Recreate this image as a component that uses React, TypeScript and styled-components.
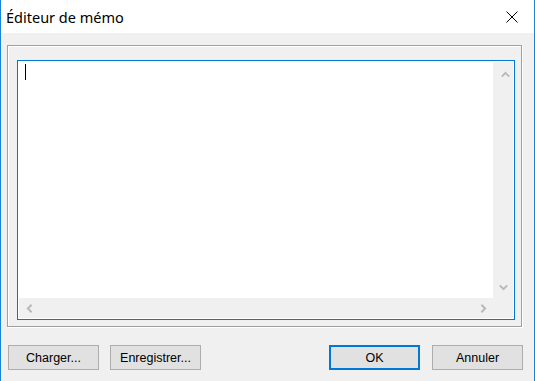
import React from "react";
import styled, { createGlobalStyle } from "styled-components";

const Global = createGlobalStyle`
  html, body { margin: 0; padding: 0; background: #f0f0f0; }
  #root { width: 535px; height: 381px; }
`;

const Window = styled.div`
  width: 535px;
  height: 381px;
  box-sizing: border-box;
  border-left: 1px solid #1883d7;
  border-right: 1px solid #1883d7;
  display: flex;
  flex-direction: column;
  background: #f0f0f0;
  overflow: hidden;
`;

const TitleBar = styled.div`
  height: 33px;
  flex: none;
  background: #ffffff;
  display: flex;
  align-items: center;
  justify-content: space-between;
  padding-left: 5px;
`;

const Title = styled.span`
  font-family: "Noto Sans", "Open Sans", sans-serif;
  font-size: 14.5px;
  color: #000;
  line-height: 33px;
  padding-top: 1px;
`;

const CloseButton = styled.div`
  width: 44px;
  height: 33px;
  display: flex;
  align-items: center;
  justify-content: center;
`;

const Body = styled.div`
  flex: 1;
  display: flex;
  flex-direction: column;
  padding: 12px 0 0 6px;
`;

const GroupBox = styled.div`
  width: 515px;
  height: 282px;
  box-sizing: border-box;
  border: 1px solid #a0a0a0;
  box-shadow: inset 1px 1px 0 #ffffff, 1px 1px 0 #ffffff;
  padding: 14px 6px 6px 9px;
`;

const Memo = styled.div`
  width: 498px;
  height: 260px;
  box-sizing: border-box;
  border: 1px solid #0078d7;
  padding: 1px;
  background: #ffffff;
  display: grid;
  grid-template-columns: 1fr 20px;
  grid-template-rows: 1fr 20px;
`;

const TextArea = styled.div`
  background: #ffffff;
  padding: 2px 0 0 6px;
`;

const Caret = styled.div`
  width: 1px;
  height: 16px;
  background: #000;
`;

const ScrollTrack = styled.div<{ $vertical?: boolean }>`
  background: #f0f0f0;
  display: flex;
  flex-direction: ${(p) => (p.$vertical ? "column" : "row")};
  justify-content: space-between;
`;

const ScrollButton = styled.div<{ $size: number }>`
  flex: none;
  width: ${(p) => p.$size}px;
  height: ${(p) => p.$size}px;
  display: flex;
  align-items: center;
  justify-content: center;
`;

const Corner = styled.div`
  background: #f0f0f0;
`;

const ButtonRow = styled.div`
  margin-top: 18px;
  width: 515px;
  padding-left: 1px;
  display: flex;
  justify-content: space-between;
`;

const ButtonGroup = styled.div<{ $gap: number }>`
  display: flex;
  gap: ${(p) => p.$gap}px;
`;

const Button = styled.div<{ $default?: boolean }>`
  width: 91px;
  height: 25px;
  box-sizing: border-box;
  background: #e1e1e1;
  border: ${(p) => (p.$default ? "2px solid #0078d7" : "1px solid #adadad")};
  display: flex;
  align-items: center;
  justify-content: center;
  font-family: "Liberation Sans", Arial, sans-serif;
  font-size: 12.5px;
  color: #000;
`;

const Chevron = ({ dir }: { dir: "up" | "down" | "left" | "right" }) => {
  const rot = { up: 0, down: 180, left: 270, right: 90 }[dir];
  return (
    <svg width="9" height="9" viewBox="0 0 9 9" style={{ transform: `rotate(${rot}deg)` }}>
      <path d="M0.8 6.6 L4.5 2.9 L8.2 6.6" fill="none" stroke="#b9b9b9" strokeWidth="2" />
    </svg>
  );
};

export default function App() {
  return (
    <>
      <Global />
      <Window>
        <TitleBar>
          <Title>Éditeur de mémo</Title>
          <CloseButton>
            <svg width="12" height="12" viewBox="0 0 12 12">
              <path d="M0.5 0.5 L11.5 11.5 M11.5 0.5 L0.5 11.5" stroke="#000" strokeWidth="1" fill="none" />
            </svg>
          </CloseButton>
        </TitleBar>
        <Body>
          <GroupBox>
            <Memo>
              <TextArea>
                <Caret />
              </TextArea>
              <ScrollTrack $vertical>
                <ScrollButton $size={24}>
                  <Chevron dir="up" />
                </ScrollButton>
                <ScrollButton $size={21}>
                  <Chevron dir="down" />
                </ScrollButton>
              </ScrollTrack>
              <ScrollTrack>
                <ScrollButton $size={20}>
                  <Chevron dir="left" />
                </ScrollButton>
                <ScrollButton $size={20}>
                  <Chevron dir="right" />
                </ScrollButton>
              </ScrollTrack>
              <Corner />
            </Memo>
          </GroupBox>
          <ButtonRow>
            <ButtonGroup $gap={11}>
              <Button>Charger...</Button>
              <Button>Enregistrer...</Button>
            </ButtonGroup>
            <ButtonGroup $gap={12}>
              <Button $default>OK</Button>
              <Button>Annuler</Button>
            </ButtonGroup>
          </ButtonRow>
        </Body>
      </Window>
    </>
  );
}
